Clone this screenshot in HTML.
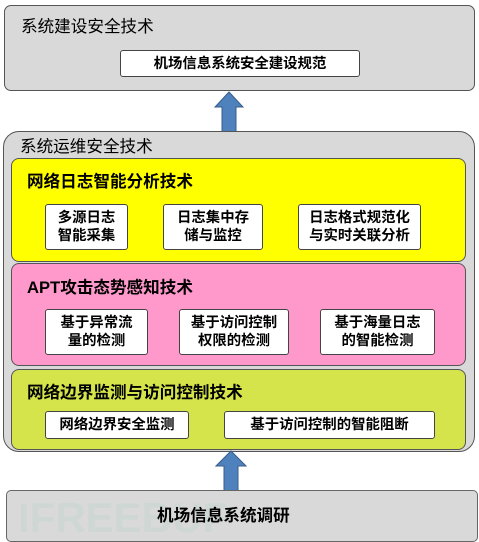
<!DOCTYPE html><html><head><meta charset="utf-8"><style>
body{margin:0;width:479px;height:542px;background:#fff;position:relative;overflow:hidden;font-family:"Liberation Sans","Noto Sans CJK SC",sans-serif;font-weight:bold;color:#000}
.a{position:absolute;box-sizing:border-box}
.w{background:#fff;border:1px solid #444;border-radius:3px;font-size:14.4px;line-height:18px;text-align:center;display:flex;align-items:center;justify-content:center;white-space:nowrap}
.t{position:absolute;font-size:16.6px;line-height:20px;white-space:nowrap}
</style></head><body>
<div class="a" style="left:4px;top:5px;width:471px;height:86px;background:#d9d9d9;border:1px solid #555;border-radius:7px"></div>
<div class="t" style="left:21px;top:17px;font-weight:normal">系统建设安全技术</div>
<div class="a w" style="left:120px;top:50px;width:240px;height:27px">机场信息系统安全建设规范</div>
<svg class="a" style="left:214px;top:91px" width="30" height="42"><polygon points="15,1 29,16 22,16 22,41 8,41 8,16 1,16" fill="#4f81bd" stroke="#385d8a"/></svg>
<div class="a" style="left:3px;top:131px;width:472px;height:321px;background:#d9d9d9;border:1px solid #555;border-radius:16px"></div>
<div class="t" style="left:20px;top:137px;font-weight:normal">系统运维安全技术</div>
<div class="a" style="left:11px;top:158px;width:455px;height:104px;background:#ffff00;border:1px solid #555;border-radius:8px"></div>
<div class="t" style="left:27px;top:172px">网络日志智能分析技术</div>
<div class="a w" style="left:45px;top:204px;width:83px;height:46px">多源日志<br>智能采集</div>
<div class="a w" style="left:163px;top:204px;width:100px;height:46px">日志集中存<br>储与监控</div>
<div class="a w" style="left:298px;top:204px;width:123px;height:46px">日志格式规范化<br>与实时关联分析</div>
<div class="a" style="left:11px;top:263px;width:455px;height:103px;background:#ff99cc;border:1px solid #555;border-radius:8px"></div>
<div class="t" style="left:27px;top:278px">APT攻击态势感知技术</div>
<div class="a w" style="left:45px;top:309px;width:103px;height:46px">基于异常流<br>量的检测</div>
<div class="a w" style="left:179px;top:309px;width:110px;height:46px">基于访问控制<br>权限的检测</div>
<div class="a w" style="left:320px;top:309px;width:115px;height:46px">基于海量日志<br>的智能检测</div>
<div class="a" style="left:11px;top:369px;width:455px;height:81px;background:#d4e44a;border:1px solid #555;border-radius:8px"></div>
<div class="t" style="left:27px;top:383px">网络边界监测与访问控制技术</div>
<div class="a w" style="left:45px;top:411px;width:144px;height:28px">网络边界安全监测</div>
<div class="a w" style="left:224px;top:411px;width:211px;height:28px">基于访问控制的智能阻断</div>
<svg class="a" style="left:215px;top:450px" width="32" height="42"><polygon points="16,1 31,16 23,16 23,41 9,41 9,16 1,16" fill="#4f81bd" stroke="#385d8a"/></svg>
<div class="a" style="left:6px;top:490px;width:472px;height:52px;background:#d9d9d9;border:1px solid #666;border-radius:5px"></div>
<div class="t" style="left:18px;top:497px;font-size:42px;line-height:42px;color:#cfd7d4;font-family:'Liberation Sans',sans-serif">IFREEBUF</div>
<div class="t" style="left:157px;top:506px">机场信息系统调研</div>
</body></html>
